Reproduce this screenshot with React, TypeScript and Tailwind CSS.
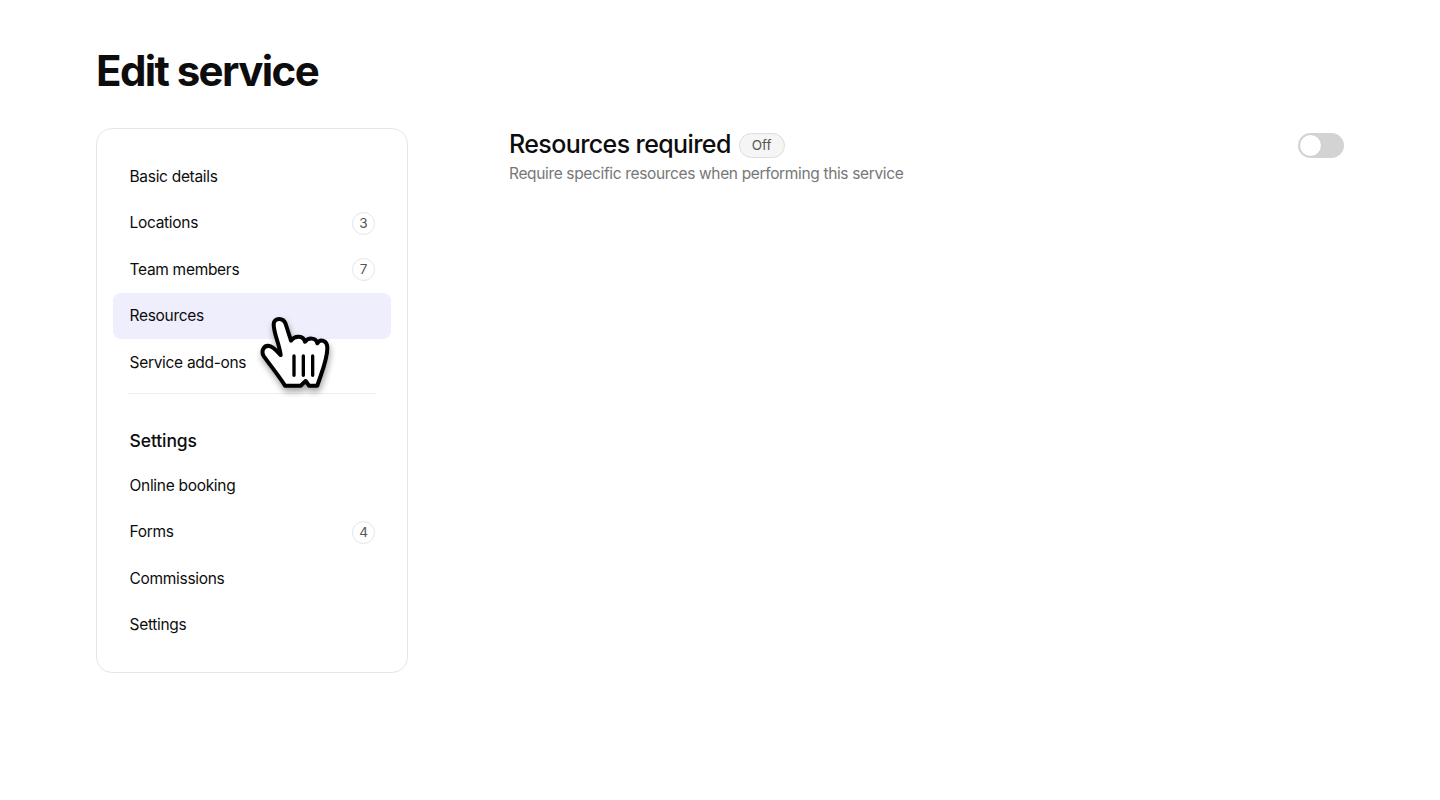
const mainItems = [
  { label: 'Basic details' },
  { label: 'Locations', count: 3 },
  { label: 'Team members', count: 7 },
  { label: 'Resources', active: true },
  { label: 'Service add-ons' },
]

const settingsItems = [
  { label: 'Online booking' },
  { label: 'Forms', count: 4 },
  { label: 'Commissions' },
  { label: 'Settings' },
]

type Item = { label: string; count?: number; active?: boolean }

function NavRow({ label, count, active }: Item) {
  return (
    <div className={`mb-px flex h-[45.4px] items-center justify-between rounded-lg pl-[16.5px] pr-4 ${active ? 'bg-[#eeeefc]' : ''}`}>
      <span className="text-[15.5px] tracking-[-0.3px] text-[#0d0d0d]">{label}</span>
      {count !== undefined && (
        <span className="flex h-[23px] w-[23px] items-center justify-center rounded-full border border-[#e5e5e5] text-[13.5px] text-[#555555]">
          {count}
        </span>
      )}
    </div>
  )
}

function HandCursor() {
  return (
    <svg
      viewBox="0 0 330 300"
      className="pointer-events-none absolute left-[143px] top-[171px] h-[100px] w-[110px] drop-shadow-[1px_4px_3px_rgba(0,0,0,0.35)]"
    >
      <path
        d="M101 72C104 52 130 52 137 72L153 122C165 105 190 107 195 125C205 112 228 112 232 130C240 116 262 120 262 145C262 180 243 222 232 257L207 257L197 243L182 257L135 257C115 225 90 195 72 170C62 155 70 135 88 138C100 140 112 155 122 165C118 130 101 102 101 72Z"
        fill="#ffffff"
        stroke="#000000"
        strokeWidth="12"
        strokeLinejoin="round"
      />
      <path d="M162 168V226M190 168V226M218 168V226" stroke="#000000" strokeWidth="10" strokeLinecap="round" fill="none" />
    </svg>
  )
}

export default function App() {
  return (
    <div className="h-[800px] bg-white pl-24 pr-24 pt-[38px] font-['Inter',sans-serif]">
      <h1 className="text-[42px] font-bold leading-[66px] tracking-[-1.6px] text-[#0d0d0d]">Edit service</h1>
      <div className="mt-[24px] flex">
        <aside className="relative h-[545px] w-[312px] shrink-0 rounded-2xl border border-[#e5e5e5] px-4 pt-[25px]">
          {mainItems.map((item) => (
            <NavRow key={item.label} {...item} />
          ))}
          <div className="mx-[15px] mt-[8px] border-t border-[#eeeeee]" />
          <h2 className="mt-[35px] pl-[16.5px] text-[17.5px] font-medium leading-6 tracking-[-0.1px] text-[#0d0d0d]">Settings</h2>
          <div className="mt-[10px]">
            {settingsItems.map((item) => (
              <NavRow key={item.label} {...item} />
            ))}
          </div>
          <HandCursor />
        </aside>
        <main className="ml-[101px] flex flex-1 items-start justify-between">
          <div>
            <div className="flex items-center gap-2">
              <span className="pb-0.5 text-[25px] font-medium leading-[32px] tracking-[-0.6px] text-[#0d0d0d]">Resources required</span>
              <span className="flex h-[25px] items-center rounded-full border border-[#dddddd] bg-[#f5f5f5] px-3 text-[13.5px] text-[#555555]">Off</span>
            </div>
            <p className="text-[15.5px] leading-[23px] tracking-[-0.35px] text-[#777777]">Require specific resources when performing this service</p>
          </div>
          <div className="mt-[5px] flex h-[25px] w-[46px] items-center rounded-full bg-[#d3d3d3] pl-px">
            <span className="h-[23px] w-[23px] rounded-full border border-[#cccccc] bg-white" />
          </div>
        </main>
      </div>
    </div>
  )
}
